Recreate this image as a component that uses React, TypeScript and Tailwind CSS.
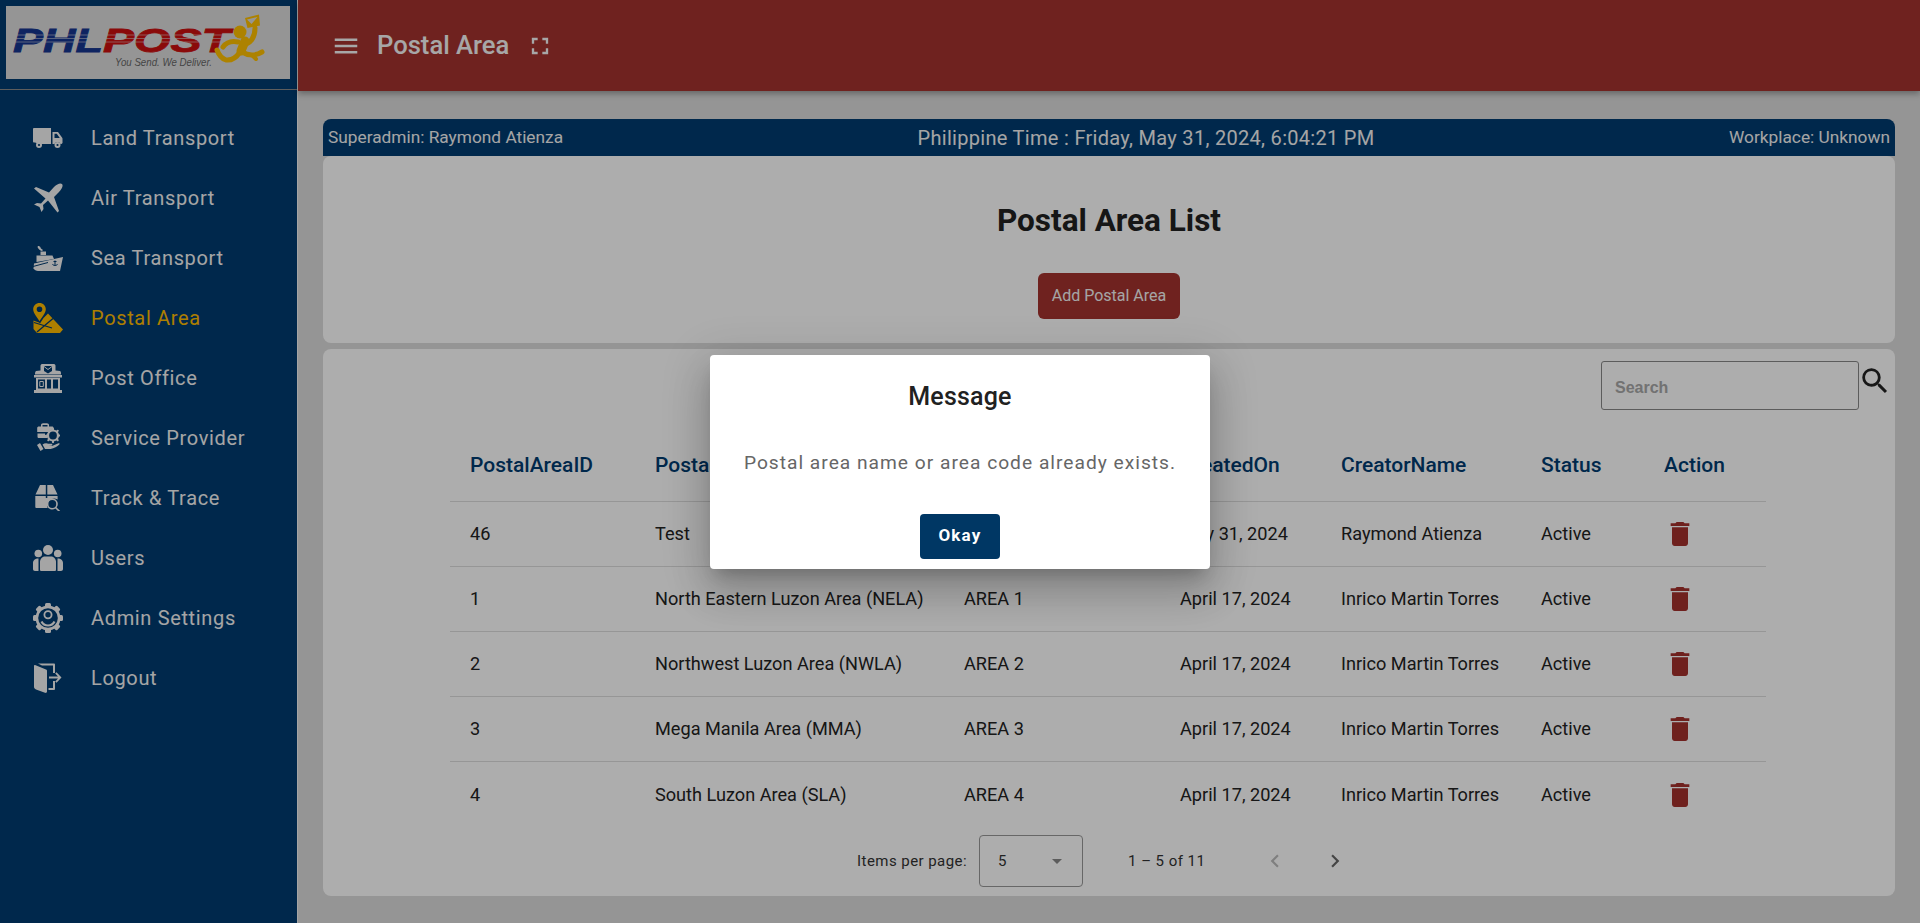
import { MdMenu, MdFullscreen, MdDelete, MdSearch, MdChevronLeft, MdChevronRight, MdArrowDropDown } from "react-icons/md";

const NAVY = "#003b70";

const Truck = () => (
  <svg viewBox="0 0 30 20" className="w-[30px] h-[20px]" fill="currentColor">
    <path d="M0 1c0-.5.5-1 1-1h17v16H4.500a3 3 0 00-3-1.500c-.5 0-1.500 0-1.500-1z" />
    <path fillRule="evenodd" d="M19.500 4H25l4 5.500c.5.5.5 1 .5 1.500v4l-1 1h-1a3.200 3.200 0 00-6 0h-2zm2 1.800V10h5.300l-3-4.200z" />
    <circle cx="6" cy="17" r="3" /><circle cx="6" cy="17" r="1.100" fill={NAVY} />
    <circle cx="24.500" cy="17" r="3" /><circle cx="24.500" cy="17" r="1.100" fill={NAVY} />
  </svg>
);

const Plane = () => (
  <svg viewBox="0 0 30 30" className="w-[30px] h-[30px]" fill="currentColor">
    <path d="M29 1C30.500 2.500 29 6 26 9L21 14 26 28 24.500 29.500 15 17.500 10 22 10.500 26 8.500 29 6.500 24 1 21.500 4 20 8 20.500 12.500 15.500 1 5.500 3 4 16 9.500 21 4C24 1 27.500-.5 29 1z" />
  </svg>
);

const Ship = () => (
  <svg viewBox="0 0 30 25" className="w-[30px] h-[25px]" fill="currentColor">
    <path d="M5 0c1.500 0 2 .5 2.500 1.500.3 1 1 1.500 2.500 2.500L9 5C7 4.500 5 2.500 4.500 1z" />
    <path d="M7.500 5.500h5.500v3.500H7.500z" />
    <path d="M3.500 9.500h16l1.500 3.500-17.500 3z" />
    <path d="M1 17.500L30 11l-3 14H5c-2 0-3.500-1-4.500-2.500z" />
    <path d="M0 20.500L15 16.500" stroke={NAVY} strokeWidth="1" fill="none" />
    <path d="M22 14.500v5M19.500 18c.5 2 4.500 2 5 0M20.500 15.500h3" stroke={NAVY} strokeWidth="1" fill="none" />
  </svg>
);

const PostalIcon = () => (
  <svg viewBox="0 0 30 30" className="w-[30px] h-[30px]" fill="currentColor">
    <path fillRule="evenodd" d="M6.500 0C3 0 .2 2.700.2 6.200c0 3.800 4 8.300 6.300 12 2.300-3.700 6.300-8.200 6.300-12C12.800 2.700 10 0 6.500 0zm0 3.500a2.800 2.800 0 110 5.600 2.800 2.800 0 010-5.600z" />
    <path d="M15 10.500L30 26.500 27 30H4l-3.500-4V17.500l5.500 2 1 1 3.500-5.500 1-1z" />
    <path d="M1 19.500L19 25M4 29L20 15.500" stroke={NAVY} strokeWidth="1.300" fill="none" />
  </svg>
);

const PostOffice = () => (
  <svg viewBox="0 0 28 29" className="w-[28px] h-[29px]" fill="currentColor">
    <path d="M8 0h12c1 0 1.500 1 1.500 2v4.500L26 7c1 .5 1 1.500 1 3.500H1C1 8 1.500 7.500 2 7l4.500-.5V2C6.500 1 7 0 8 0z" />
    <path d="M10 2h8v5l-4 2.500L10 7z" fill={NAVY} />
    <path d="M10 2.500l4 3 4-3" stroke="#f4f4f4" strokeWidth="1" fill="none" />
    <path d="M0 11h28v2.500H0z" />
    <path fillRule="evenodd" d="M2 14h24v12H2zm2 1.500v9h7v-9zm9 0v9h4v-9zm6 0v9h5v-9z" />
    <path d="M5.800 17.500h3.500v5H5.800z" stroke="currentColor" strokeWidth="1" fill="none" />
    <path d="M0 26h28v3H0z" />
  </svg>
);

const ServiceIcon = () => (
  <svg viewBox="0 0 24 30" className="w-[24px] h-[30px]" fill="currentColor">
    <path fillRule="evenodd" d="M5 2c0-1 1-1.800 2-1.800h4c1 0 2 .8 2 1.800v1.500h3c1 0 1.500.5 1.500 1.500V6L12 9H1.200V5C1.200 4 2 3.500 3 3.500h2zM6.500 2v1.500h5V2z" />
    <path d="M1.500 10.500H9V12h2.500v-1.500h1l-1 4.500H3c-1 0-1.500-.5-1.500-1.500z" />
    <circle cx="17" cy="12.500" r="5" fill="none" stroke="currentColor" strokeWidth="2.200" />
    <g stroke="currentColor" strokeWidth="2" strokeLinecap="round">
      <path d="M17 5.800v1M17 18.200v1M10.300 12.500h1M22.700 12.500h1M12.300 7.800l.7.7M21 16.500l.7.7M12.300 17.200l.7-.7M21 8.500l.7-.7" />
    </g>
    <path d="M1 22l3-2 3.500 6-3 2zM6.500 21.500c2-1.500 4-1.800 6-.7h3c1.200 0 1.200 1.500 0 1.700l-3 .3h4l6-2.500c1-.3 1.500.5.800 1.200-2 2-5 4-8.800 4.500h-5.500z" />
  </svg>
);

const TrackIcon = () => (
  <svg viewBox="0 0 26 26" className="w-[26px] h-[26px]" fill="currentColor">
    <path d="M5 0h5.800v9.500H0.500zM12.300 0H18l4.500 9.500H12.300z" />
    <path d="M.3 11h10.500v2h1.500v-2h10.300v3.500a7 7 0 00-10 8.500H1.500C.8 23 .3 22.500.3 22z" />
    <path fillRule="evenodd" d="M17.300 13.500a5.500 5.500 0 014.300 8.900l4 4-1.100 1.100-4.100-4a5.500 5.500 0 11-3.100-10zm0 1.600a3.900 3.900 0 100 7.800 3.900 3.900 0 000-7.800z" />
  </svg>
);

const Users = () => (
  <svg viewBox="0 0 30 26" className="w-[30px] h-[26px]" fill="currentColor">
    <circle cx="15" cy="5" r="5" />
    <circle cx="5.300" cy="8.500" r="3.800" />
    <circle cx="24.700" cy="8.500" r="3.800" />
    <path d="M7 17c0-3 2-5.500 5-5.500h6c3 0 5 2.500 5 5.500v7.500c0 1-.5 1.500-1.500 1.500h-13C7.500 26 7 25.500 7 24.500z" />
    <path d="M5.500 13.500C5.500 14.500 5.500 15 5.500 17v9H2c-1.200 0-2-.8-2-2v-6c0-2.500 2-4.500 5.500-4.500zM24.500 13.500c0 1 0 1.500 0 3.500v9H28c1.200 0 2-.8 2-2v-6c0-2.500-2-4.500-5.500-4.500z" />
  </svg>
);

const AdminIcon = () => (
  <svg viewBox="0 0 30 30" className="w-[30px] h-[30px]" fill="currentColor">
    <circle cx="15" cy="15" r="12.500" />
    {[0, 45, 90, 135, 180, 225, 270, 315].map((a) => (
      <rect key={a} x="12" y="0" width="6" height="5" rx="1.500" transform={`rotate(${a} 15 15)`} />
    ))}
    <circle cx="15" cy="15" r="9.800" fill={NAVY} />
    <circle cx="15" cy="11.800" r="3.600" fill="none" stroke="currentColor" strokeWidth="1.800" />
    <path d="M8.500 18.500c1.500 3 4 4 6.500 4s5-1 6.500-4" fill="none" stroke="currentColor" strokeWidth="2.200" />
  </svg>
);

const LogoutIcon = () => (
  <svg viewBox="0 0 28 30" className="w-[28px] h-[30px]" fill="currentColor">
    <path d="M1 2l11 4.500c.8.3 1 .8 1 1.500v20.500c0 1-.8 1.700-2 1.300L2 26.500c-1-.4-2-1.500-2-2.500V3c0-1 .5-1.300 1-1z" />
    <path d="M4 .5h16c.5 0 1 .5 1 1V10h-2V2.500H8z" />
    <path d="M19 18h2v8c0 .5-.5 1-1 1h-5.500v-2H19z" />
    <path d="M15 13.500h9l-2.800-3 1.300-1.200 5 5.200-5 5.200-1.300-1.200 2.800-3h-9z" />
  </svg>
);

const Logo = () => (
  <svg viewBox="0 0 284 73" className="w-[284px] h-[73px]">
    <g fontFamily="'Liberation Sans', sans-serif" fontWeight="700" fontStyle="italic" fontSize="34">
      <text x="7" y="46" fill="#16368f" textLength="90" lengthAdjust="spacingAndGlyphs" stroke="#16368f" strokeWidth="0.800">PHL</text>
      <text x="97" y="46" fill="#cc1010" textLength="127" lengthAdjust="spacingAndGlyphs" stroke="#cc1010" strokeWidth="0.800">POST</text>
    </g>
    <path d="M8 29h218M8 32.500h218M8 36h218" stroke="#dcdcdc" strokeWidth=".7" opacity=".8" />
    <text x="109" y="60" fontFamily="'Liberation Sans', sans-serif" fontStyle="italic" fontSize="11" textLength="97" lengthAdjust="spacingAndGlyphs" fill="#666666">You Send. We Deliver.</text>
    <g fill="none" stroke="#ffc000" strokeWidth="5" strokeLinecap="round" strokeLinejoin="round">
      <path d="M249 22 Q249 36 237 39" />
      <path d="M232 36 Q222 34 217 41" />
      <path d="M234 46 Q228 55 220 54 Q214 52 211 44" />
      <path d="M236 46 Q246 52 256 46" />
      <path d="M247 50 L250 53" strokeWidth="4" />
      <path d="M239 35 L235 45" strokeWidth="9" />
    </g>
    <circle cx="234" cy="26" r="6.500" fill="#ffc000" />
    <path fillRule="evenodd" fill="#ffc000" d="M239 12l14-3.500 1 11-12.500 2.500zM241 13.500l4.500 4.500 6-7z" />
  </svg>
);

const menu = [
  { label: "Land Transport", icon: <Truck /> },
  { label: "Air Transport", icon: <Plane /> },
  { label: "Sea Transport", icon: <Ship /> },
  { label: "Postal Area", icon: <PostalIcon />, active: true },
  { label: "Post Office", icon: <PostOffice /> },
  { label: "Service Provider", icon: <ServiceIcon /> },
  { label: "Track & Trace", icon: <TrackIcon /> },
  { label: "Users", icon: <Users /> },
  { label: "Admin Settings", icon: <AdminIcon /> },
  { label: "Logout", icon: <LogoutIcon /> },
];

const rows = [
  ["46", "Test", "", "May 31, 2024", "Raymond Atienza"],
  ["1", "North Eastern Luzon Area (NELA)", "AREA 1", "April 17, 2024", "Inrico Martin Torres"],
  ["2", "Northwest Luzon Area (NWLA)", "AREA 2", "April 17, 2024", "Inrico Martin Torres"],
  ["3", "Mega Manila Area (MMA)", "AREA 3", "April 17, 2024", "Inrico Martin Torres"],
  ["4", "South Luzon Area (SLA)", "AREA 4", "April 17, 2024", "Inrico Martin Torres"],
];

const cols = "grid grid-cols-[185px_309px_216px_161px_200px_123px_1fr] pl-[20px] items-center";

export default function App() {
  return (
    <div className="relative w-[1920px] h-[923px] overflow-hidden flex bg-[#dcdcdc] font-['Roboto',sans-serif]">
      <aside className="w-[298px] shrink-0 h-full bg-[#003b70] flex flex-col border-r border-r-[#f2f2f2]">
        <div className="h-[90px] shrink-0 border-b border-b-[#8a8a8a] pt-[6px] pl-[6px]">
          <div className="w-[284px] h-[73px] bg-[#dcdcdc]">
            <Logo />
          </div>
        </div>
        <nav className="flex flex-col pt-[18px]">
          {menu.map((m) => (
            <div key={m.label} className={`h-[60px] flex items-center pl-[33px] ${m.active ? "text-[#ffbb00]" : "text-[#f4f4f4]"}`}>
              <span className="w-[30px] h-[40px] flex items-center justify-center shrink-0">{m.icon}</span>
              <span className="ml-[28px] text-[20px] tracking-[0.65px] font-normal">{m.label}</span>
            </div>
          ))}
        </nav>
      </aside>

      <main className="flex-1 min-w-0 flex flex-col">
        <header className="h-[91px] shrink-0 bg-[#a4332e] flex items-center pl-[33px] text-[#f6f6f6] shadow-[0_3px_6px_rgba(0,0,0,0.3)]">
          <MdMenu className="w-[30px] h-[30px]" />
          <span className="ml-[16px] text-[25.600px] font-medium">Postal Area</span>
          <MdFullscreen className="ml-[17px] w-[28px] h-[28px]" />
        </header>

        <div className="flex-1 min-h-0 flex flex-col pt-[28px] pl-[25px] pr-[25px]">
          <div className="h-[37px] shrink-0 rounded-t-[8px] bg-[#003b70] text-[#f4f4f4] flex items-center justify-between px-[5px]">
            <span className="text-[17.300px]">Superadmin: Raymond Atienza</span>
            <span className="text-[20px] tracking-[0.3px]">Philippine Time : Friday, May 31, 2024, 6:04:21 PM</span>
            <span className="text-[17.300px]">Workplace: Unknown</span>
          </div>
          <section className="h-[187px] shrink-0 bg-white rounded-[8px] flex flex-col items-center pt-[47px]">
            <h1 className="text-[31.500px] leading-[35px] font-bold text-[#212121]">Postal Area List</h1>
            <button className="mt-[35px] w-[142px] h-[46px] rounded-[6px] bg-[#a4332e] text-[#f4f4f4] text-[16px]">Add Postal Area</button>
          </section>
          <section className="mt-[6px] h-[547px] shrink-0 bg-white rounded-[8px] flex flex-col">
            <div className="h-[77px] shrink-0 flex justify-end items-start pt-[12px] pr-[3px]">
              <div className="w-[258px] h-[49px] border border-[#888] rounded-[3px] flex items-center pl-[13px] pt-[4px] font-['Liberation_Sans',sans-serif] font-bold text-[16px] text-[#a8a8a8]">Search</div>
              <MdSearch className="w-[34px] h-[34px] ml-[-1px] mt-[3px] text-[#222]" />
            </div>
            <div className="ml-[127px] w-[1316px]">
              <div className={`${cols} h-[76px] pt-[5px] border-b border-b-[#dedede] text-[21px] font-medium text-[#003b70]`}>
                <span>PostalAreaID</span><span>PostalAreaName</span><span>AreaCode</span><span>CreatedOn</span><span>CreatorName</span><span>Status</span><span>Action</span>
              </div>
              {rows.map((r, i) => (
                <div key={r[0]} className={`${cols} h-[65px] text-[18.150px] text-[#222] ${i < 4 ? "border-b border-b-[#dedede]" : ""}`}>
                  {r.map((c, j) => <span key={j}>{c}</span>)}
                  <span>Active</span>
                  <span><MdDelete className="w-[32px] h-[32px] text-[#a4322d]" /></span>
                </div>
              ))}
            </div>
            <div className="mt-[8px] flex items-center pl-[534px] text-[15px] text-[#333]">
              <span className="tracking-[0.45px]">Items per page:</span>
              <div className="ml-[12px] w-[104px] h-[52px] border border-[#999] rounded-[4px] flex items-center justify-between pl-[18px] pr-[13px]">
                <span>5</span>
                <MdArrowDropDown className="w-[24px] h-[24px] text-[#888]" />
              </div>
              <span className="ml-[45px] tracking-[0.45px]">1 – 5 of 11</span>
              <MdChevronLeft className="ml-[57px] w-[26px] h-[26px] text-[#bbb]" />
              <MdChevronRight className="ml-[34px] w-[26px] h-[26px] text-[#666]" />
            </div>
          </section>
        </div>
      </main>

      <div className="absolute inset-0 bg-black/32 flex items-center justify-center">
        <div className="w-[500px] h-[214px] bg-white rounded-[4px] shadow-[0_11px_15px_-7px_rgba(0,0,0,0.2),0_24px_38px_3px_rgba(0,0,0,0.14),0_9px_46px_8px_rgba(0,0,0,0.12)] flex flex-col items-center pt-[26px]">
          <h2 className="text-[25px] leading-[32px] font-medium tracking-[0.2px] text-[#212121]">Message</h2>
          <p className="mt-[38px] text-[19.200px] leading-[24px] tracking-[1px] text-[#666]">Postal area name or area code already exists.</p>
          <button className="mt-[39px] w-[80px] h-[45px] rounded-[4px] bg-[#003764] text-white text-[17px] font-bold tracking-[1.200px]">Okay</button>
        </div>
      </div>
    </div>
  );
}
